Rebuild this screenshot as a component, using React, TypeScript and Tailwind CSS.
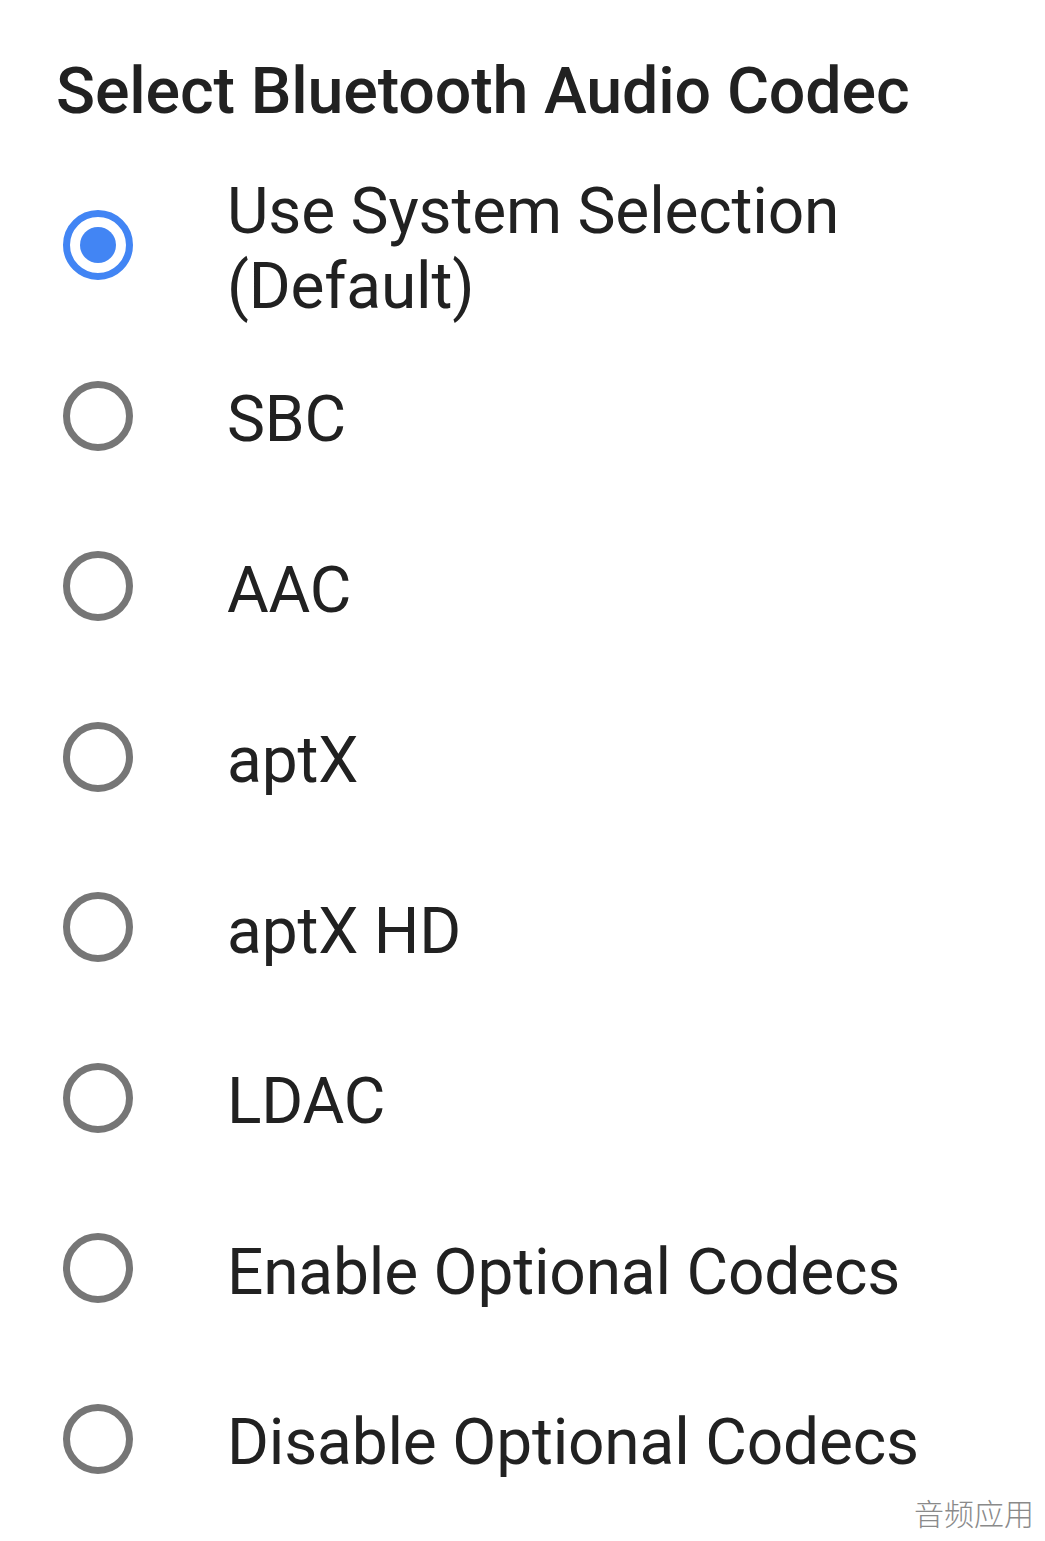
import React from "react";

const options = [
  "Use System Selection (Default)",
  "SBC",
  "AAC",
  "aptX",
  "aptX HD",
  "LDAC",
  "Enable Optional Codecs",
  "Disable Optional Codecs",
];

const Radio: React.FC<{ checked?: boolean }> = ({ checked }) => (
  <div
    className={`w-[70px] h-[70px] shrink-0 rounded-full border-[7px] flex items-center justify-center ${
      checked ? "border-[#4285f4]" : "border-[#767676]"
    }`}
  >
    {checked && <div className="w-[36px] h-[36px] rounded-full bg-[#4285f4]" />}
  </div>
);

export default function App() {
  const [selected, setSelected] = React.useState(0);

  return (
    <div className="relative w-[1045px] h-[1541px] bg-white overflow-hidden font-['Roboto','Noto_Sans',sans-serif] text-[#212121]">
      {/* Dialog title */}
      <div className="pt-[58px] pl-[56px]">
        <h1 className="text-[64.5px] leading-[66px] font-medium tracking-[-0.15px]">
          Select Bluetooth Audio Codec
        </h1>
      </div>

      {/* Options */}
      <div className="mt-[36px] flex flex-col">
        {options.map((label, idx) => (
          <div
            key={idx}
            onClick={() => setSelected(idx)}
            className="h-[170.5px] flex items-center pl-[63px] pr-[40px] gap-[94px] cursor-pointer"
          >
            <Radio checked={selected === idx} />
            <div className="pt-[8px] text-[64px] leading-[75px] font-normal tracking-[-0.18px]">
              {label}
            </div>
          </div>
        ))}
      </div>

      {/* Watermark */}
      <div className="absolute right-[11px] bottom-[6px] text-[30px] font-light text-[#8a8a8a] font-['Noto_Sans_CJK_SC',sans-serif]">
        音频应用
      </div>
    </div>
  );
}
